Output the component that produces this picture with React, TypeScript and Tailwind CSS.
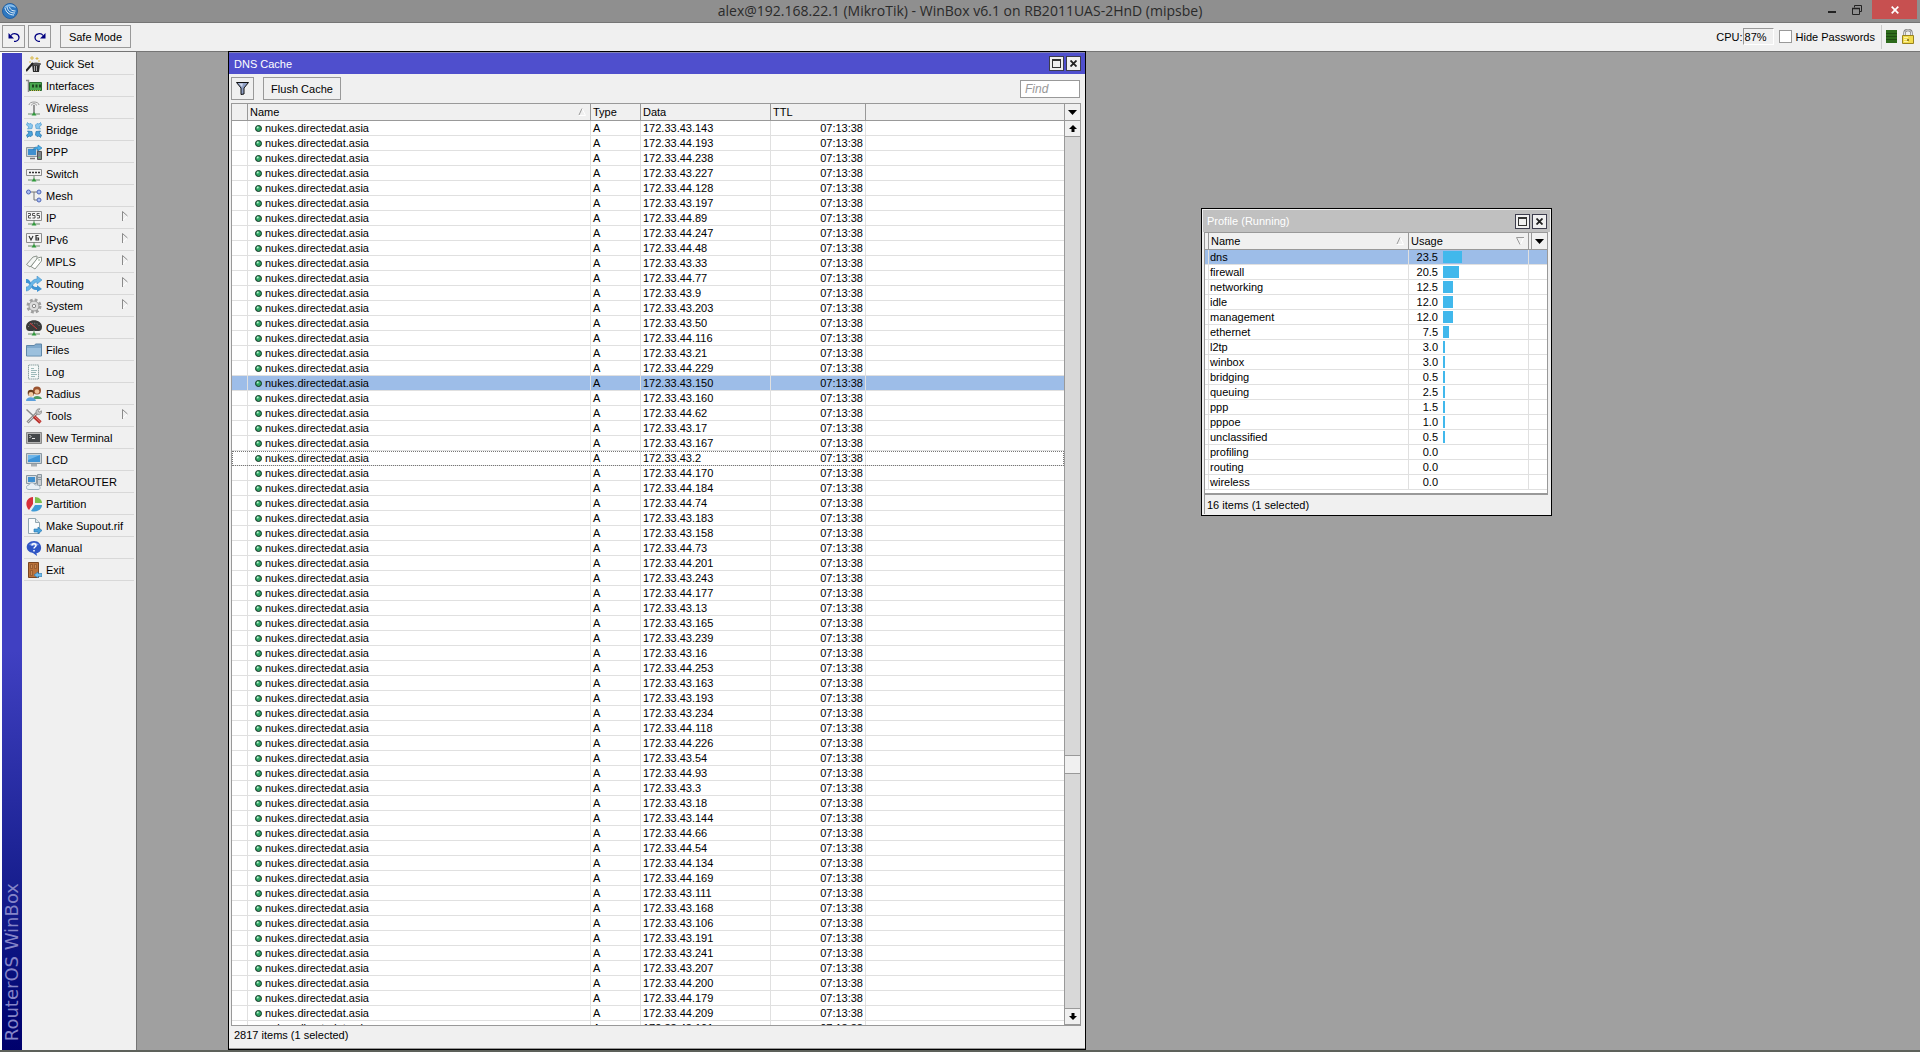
import { ReactNode, useState } from "react";

type MenuEntry = { label: string; icon: ReactNode; submenu?: boolean };

type ProfileRow = { name: string; usage: number };

const HOST = "nukes.directedat.asia";
const TTL = "07:13:38";

const addresses = [
  "43.143", "44.193", "44.238", "43.227", "44.128", "43.197", "44.89", "44.247",
  "44.48", "43.33", "44.77", "43.9", "43.203", "43.50", "44.116", "43.21",
  "44.229", "43.150", "43.160", "44.62", "43.17", "43.167", "43.2", "44.170",
  "44.184", "44.74", "43.183", "43.158", "44.73", "44.201", "43.243", "44.177",
  "43.13", "43.165", "43.239", "43.16", "44.253", "43.163", "43.193", "43.234",
  "44.118", "44.226", "43.54", "44.93", "43.3", "43.18", "43.144", "44.66",
  "44.54", "44.134", "44.169", "43.111", "43.168", "43.106", "43.191", "43.241",
  "43.207", "44.200", "44.179", "44.209", "43.101",
];

const profileRows: ProfileRow[] = [
  { name: "dns", usage: 23.5 },
  { name: "firewall", usage: 20.5 },
  { name: "networking", usage: 12.5 },
  { name: "idle", usage: 12 },
  { name: "management", usage: 12 },
  { name: "ethernet", usage: 7.5 },
  { name: "l2tp", usage: 3 },
  { name: "winbox", usage: 3 },
  { name: "bridging", usage: 0.5 },
  { name: "queuing", usage: 2.5 },
  { name: "ppp", usage: 1.5 },
  { name: "pppoe", usage: 1 },
  { name: "unclassified", usage: 0.5 },
  { name: "profiling", usage: 0 },
  { name: "routing", usage: 0 },
  { name: "wireless", usage: 0 },
];

function Icon({ children }: { children: ReactNode }) {
  return (
    <svg viewBox="0 0 16 16" className="h-4 w-4 shrink-0" fill="none" aria-hidden="true">
      {children}
    </svg>
  );
}

// Green plug that hangs under the network icons
function Plug() {
  return (
    <>
      <path d="M8 10v3M2 14h12" stroke="#6c8a6c" />
      <path d="M5.5 15.5L8 12l2.5 3.5z" fill="#2f9a3a" />
    </>
  );
}

const menu: MenuEntry[] = [
  {
    label: "Quick Set",
    icon: (
      <Icon>
        <path d="M6 8h8l-1 8H7z" fill="#2b2b2b" />
        <ellipse cx="10" cy="8" rx="5" ry="1.5" fill="#555" />
        <path d="M8.500 10v5M10.500 10v5" stroke="#aaa" />
        <path d="M0 15l7-8" stroke="#222" strokeWidth="2" />
        <path d="M6 0v4M4 2h4M11 1v3M9.500 2.500h3M4 5v2M13 4v2" stroke="#d8b84a" />
      </Icon>
    ),
  },
  {
    label: "Interfaces",
    icon: (
      <Icon>
        <path d="M0 2.500h2.500V14" stroke="#8a8a8a" strokeWidth="1.500" />
        <path d="M3.500 4.500h12v8h-12z" fill="#4aa850" stroke="#2a6b30" />
        <path d="M6 6.500h2v3H6zM9.500 6.500h2v3h-2zM13 6.500h2v3h-2z" fill="#1d4420" />
        <path d="M5 12.500h9" stroke="#c9b64d" strokeDasharray="1 1" />
      </Icon>
    ),
  },
  {
    label: "Wireless",
    icon: (
      <Icon>
        <path d="M3 5c0-4 10-4 10 0M5.500 5.500c0-2.500 5-2.500 5 0" stroke="#9a9a9a" />
        <path d="M8 5v8" stroke="#777" strokeWidth="1.500" />
        <path d="M2 14h12" stroke="#6c8a6c" />
        <path d="M5.500 15.500L8 12l2.500 3.500z" fill="#2f9a3a" />
      </Icon>
    ),
  },
  {
    label: "Bridge",
    icon: (
      <Icon>
        <path d="M1.500.500L3 2l2-.5L6.500 3 6 6.500l-4.500.5L3 5 .5 3z" fill="#8cc8ee" stroke="#4d9bd0" strokeWidth="0.700" />
        <path d="M14.500.500L13 2l-2-.5L9.500 3l.5 3.500 4.500.5L13 5l2.500-2z" fill="#8cc8ee" stroke="#4d9bd0" strokeWidth="0.700" />
        <path d="M1.500 15.500L3 14l2 .5L6.500 13 6 9.500 1.500 9 3 11 .5 13z" fill="#4aa3dc" stroke="#2472ab" strokeWidth="0.700" />
        <path d="M14.500 15.500L13 14l-2 .5L9.500 13l.5-3.500 4.500-.5L13 11l2.500 2z" fill="#4aa3dc" stroke="#2472ab" strokeWidth="0.700" />
      </Icon>
    ),
  },
  {
    label: "PPP",
    icon: (
      <Icon>
        <path d="M.5 3.500h11v9H.5z" fill="#c9d2d8" stroke="#8b97a0" />
        <path d="M2 5h8v6H2z" fill="#3f8fce" />
        <path d="M4 14.500h5" stroke="#777" strokeWidth="1.500" />
        <path d="M11.500 7.500h4v8h-4z" fill="#7c8288" stroke="#555" />
        <path d="M7 6c1-3 3-3 5-3V1l4 3-4 3V5c-2 0-4 0-5 1z" fill="#4ab0ea" stroke="#2374ad" strokeWidth="0.600" />
        <path d="M12.500 13.500h2" stroke="#5ec45e" />
      </Icon>
    ),
  },
  {
    label: "Switch",
    icon: (
      <Icon>
        <path d="M.5 3.500h15v6H.5z" fill="#f4f4f4" stroke="#8d8d8d" />
        <path d="M3 6.500h2M6 6.500h2M9 6.500h2M12 6.500h2" stroke="#333" strokeWidth="1.500" />
        <Plug />
      </Icon>
    ),
  },
  {
    label: "Mesh",
    icon: (
      <Icon>
        <path d="M5 4h6M8 4v8h3" stroke="#777" />
        <circle cx="2.500" cy="4" r="2" fill="#a9bdf0" stroke="#5167b8" />
        <circle cx="13" cy="4" r="2" fill="#a9bdf0" stroke="#5167b8" />
        <circle cx="13" cy="12" r="2" fill="#a9bdf0" stroke="#5167b8" />
      </Icon>
    ),
  },
  {
    label: "IP",
    submenu: true,
    icon: (
      <Icon>
        <path d="M.5 1.500h15v9H.5z" fill="#f4f4f4" stroke="#8d8d8d" />
        <path d="M2 3.500h2.500v2h-2V8H5M9 3.500H6.500v2H9V8H6.500M13.500 3.500H11v2h2.500V8H11" stroke="#555" />
        <Plug />
      </Icon>
    ),
  },
  {
    label: "IPv6",
    submenu: true,
    icon: (
      <Icon>
        <path d="M.5 1.500h15v9H.5z" fill="#f4f4f4" stroke="#8d8d8d" />
        <path d="M3 4l2 4 2-4M12.500 3.500H10v4.500h2.500V6H10" stroke="#333" strokeWidth="1.200" />
        <Plug />
      </Icon>
    ),
  },
  {
    label: "MPLS",
    submenu: true,
    icon: (
      <Icon>
        <path d="M.5 10.500L7 3l4-1v3.500L4 13z" fill="#f3f5f3" stroke="#8c948c" />
        <path d="M5 12.500L11.500 4l4-1v4L9 15z" fill="#fff" stroke="#8c948c" />
        <circle cx="13" cy="6" r=".7" fill="#6c8a6c" />
      </Icon>
    ),
  },
  {
    label: "Routing",
    submenu: true,
    icon: (
      <Icon>
        <path d="M0 3c5-1 5 9 11 8V9l5 4-5 3v-2C4 15 5 6 0 7z" fill="#3f94d4" />
        <path d="M0 15v-4c5 0 4-8 11-8V0l5 4-5 4V6c-5 0-5 9-11 9z" fill="#68b6e8" stroke="#3a86c0" strokeWidth="0.500" />
      </Icon>
    ),
  },
  {
    label: "System",
    submenu: true,
    icon: (
      <Icon>
        <circle cx="8" cy="8" r="6" stroke="#a0a0a0" strokeWidth="3" strokeDasharray="2.700 2" />
        <circle cx="8" cy="8" r="5" fill="#dcdcdc" stroke="#9a9a9a" />
        <circle cx="8" cy="8" r="1.700" fill="#f4f4f4" stroke="#888" />
      </Icon>
    ),
  },
  {
    label: "Queues",
    icon: (
      <Icon>
        <path d="M0 7c0-9 16-9 16 0 0 3-2 4-3 4H3c-1 0-3-1-3-4z" fill="#3a3a3a" />
        <path d="M2.500 7c0-5 11-5 11 0" stroke="#8a8a8a" strokeDasharray="1 1.500" />
        <path d="M4 3l7 6" stroke="#d43c3c" />
        <Plug />
      </Icon>
    ),
  },
  {
    label: "Files",
    icon: (
      <Icon>
        <path d="M.5 3.500h8l1-1.500h6v12H.5z" fill="#7fa9cc" stroke="#5f86a8" />
        <path d="M1 6h14v7.500H1z" fill="#9cc0dd" />
      </Icon>
    ),
  },
  {
    label: "Log",
    icon: (
      <Icon>
        <path d="M2.500 1v14h10V1z" fill="#f5f8f7" stroke="#8fa3a3" strokeDasharray="1.500 .5" />
        <path d="M5 4.500h3M5 6.500h6M5 8.500h5M5 10.500h6M5 12.500h4" stroke="#9db9b9" />
      </Icon>
    ),
  },
  {
    label: "Radius",
    icon: (
      <Icon>
        <path d="M7 13c0-4 8-4 9 0z" fill="#4c9a5e" />
        <circle cx="11" cy="4.500" r="4" fill="#9a5230" />
        <circle cx="11" cy="5.500" r="2.300" fill="#f0c197" />
        <path d="M0 15c0-5 9-5 10 0z" fill="#5c9fdc" />
        <circle cx="5" cy="7" r="3.300" fill="#6b3d1c" />
        <circle cx="5" cy="8.300" r="2.400" fill="#f3cba3" />
      </Icon>
    ),
  },
  {
    label: "Tools",
    submenu: true,
    icon: (
      <Icon>
        <path d="M1.500 14.500L11 5" stroke="#8e8e8e" strokeWidth="3" />
        <path d="M2 14L11 5" stroke="#d0d0d0" />
        <path d="M14 .8l-2 2 1 1.400 2.500-1.400c.5 3-2 4.500-4 3.500S9 .5 14 .8z" fill="#c4c4c4" stroke="#808080" strokeWidth="0.700" />
        <path d="M.5 1.500l7.500 7" stroke="#8a8a8a" strokeWidth="1.500" />
        <path d="M8 8.500l6.500 6" stroke="#b8302c" strokeWidth="3.400" />
        <path d="M8.500 8.500l6 5.500" stroke="#e8807a" />
      </Icon>
    ),
  },
  {
    label: "New Terminal",
    icon: (
      <Icon>
        <path d="M.5 2.500h15v11H.5z" fill="#b4b4b4" stroke="#8a8a8a" />
        <path d="M2 4h12v8H2z" fill="#44474a" />
        <path d="M3.500 5l1.500 1.500L3.500 8M6 8.500h3" stroke="#e6e6e6" />
      </Icon>
    ),
  },
  {
    label: "LCD",
    icon: (
      <Icon>
        <path d="M.5 1.500h15v10H.5z" fill="#c9d2d8" stroke="#8b97a0" />
        <path d="M2 3h12v7H2z" fill="#3d93d6" />
        <path d="M2 3h12L2 8z" fill="#6fb6ea" />
        <path d="M5 12h6v2.500H5z" fill="#a6adb2" />
      </Icon>
    ),
  },
  {
    label: "MetaROUTER",
    icon: (
      <Icon>
        <path d="M11.500.500h4v11h-4z" fill="#c9ced2" stroke="#8b97a0" />
        <path d="M12 3.500h3M12 5.500h3" stroke="#8b97a0" />
        <path d="M.5 1.500h10v8H.5z" fill="#d5dde2" stroke="#8b97a0" />
        <path d="M2 3h7v5H2z" fill="#3f8fce" />
        <path d="M3 15.500c-4 0-3-4.500 0-4.500 1-3 5-3 6 0 5-1 7 4.500 3 4.500z" fill="#e9f0f5" stroke="#9fb2c0" />
      </Icon>
    ),
  },
  {
    label: "Partition",
    icon: (
      <Icon>
        <path d="M7 1v7l-4 6C-1 10-1 2 7 1z" fill="#d8303a" />
        <path d="M9 1c4 0 7 3 7 6H9z" fill="#7cc04b" />
        <path d="M9 9h7c0 4-5 8-11 6z" fill="#3f9bd6" />
      </Icon>
    ),
  },
  {
    label: "Make Supout.rif",
    icon: (
      <Icon>
        <path d="M2.500.5h7l4 4v11h-11z" fill="#fafcfd" stroke="#93a7b0" />
        <path d="M9.500.5v4h4" fill="#dfe8ec" stroke="#93a7b0" />
        <path d="M8 11h4V9l4 3.500-4 3.500v-2H8z" fill="#4aa3dc" stroke="#2472ab" strokeWidth="0.600" />
      </Icon>
    ),
  },
  {
    label: "Manual",
    icon: (
      <Icon>
        <path d="M8 1c9 0 9 12 2.500 12L11 16l-4-3C-2 12-1 1 8 1z" fill="#2f55c4" />
        <path d="M3 5c2-3.500 8-3.500 10 0-3 1-7 1-10 0z" fill="#7d9bea" />
        <path d="M6 5.500c0-2.500 4-2.500 4 0C10 7 8 7 8 8.500M8 10v1.500" stroke="#fff" strokeWidth="1.500" />
      </Icon>
    ),
  },
  {
    label: "Exit",
    icon: (
      <Icon>
        <path d="M2.500.5h10v15h-10z" fill="#b9713a" stroke="#7a4520" />
        <path d="M4.500 2.500h2v4h-2zM8.500 2.500h2v4h-2zM4.500 8.500h2v5h-2z" fill="#c98852" stroke="#8a5228" strokeWidth="0.700" />
        <path d="M16 11.500h-4V10l-4 3 4 3v-1.500h4z" fill="#6fb9e8" stroke="#2472ab" strokeWidth="0.600" />
      </Icon>
    ),
  },
];

function WindowControls() {
  return (
    <div className="flex gap-[2px]">
      <button
        aria-label="Maximize"
        className="flex h-[15px] w-[15px] items-center justify-center border border-[#3c3c4c] bg-[#f0f0f0]"
      >
        <span className="h-[9px] w-[9px] border border-t-2 border-[#333]" />
      </button>
      <button
        aria-label="Close"
        className="flex h-[15px] w-[15px] items-center justify-center border border-[#3c3c4c] bg-[#f0f0f0]"
      >
        <svg viewBox="0 0 7 7" className="h-[7px] w-[7px]" aria-hidden="true">
          <path d="M.5.5l6 6M6.500.5l-6 6" stroke="#222" strokeWidth="1.800" />
        </svg>
      </button>
    </div>
  );
}

function ColumnsButton() {
  return (
    <button aria-label="Choose columns" className="flex h-4 w-full items-center justify-center bg-[#f0f0f0]">
      <svg viewBox="0 0 9 5" className="h-[5px] w-[9px]" aria-hidden="true">
        <path d="M0 0h9L4.500 5z" fill="#000" />
      </svg>
    </button>
  );
}

function SortMark({ down = false }: { down?: boolean }) {
  return (
    <svg viewBox="0 0 8 8" className="h-2 w-2" fill="none" aria-hidden="true">
      {down ? (
        <>
          <path d="M7.500 1L4.500 7.500" stroke="#fff" />
          <path d="M8 .5H.5L4 7.500" stroke="#999" />
        </>
      ) : (
        <>
          <path d="M4 .5L7.500 7.500H1" stroke="#fff" />
          <path d="M4 .5L1 7" stroke="#999" />
        </>
      )}
    </svg>
  );
}

function ScrollArrow({ down = false }: { down?: boolean }) {
  return (
    <button
      aria-label={down ? "Scroll down" : "Scroll up"}
      className="flex h-4 w-full shrink-0 items-center justify-center border-b border-[#999] bg-[#f0f0f0]"
    >
      <svg viewBox="0 0 8 7" className="h-[7px] w-2" aria-hidden="true">
        <path d={down ? "M2.500 0h3v3H8L4 7 0 3h2.500z" : "M4 0l4 4H5.500v3h-3V4H0z"} fill="#000" />
      </svg>
    </button>
  );
}

function HeadCell({ label, children }: { label?: string; children?: ReactNode }) {
  return (
    <th scope="col" className="h-[17px] border-r border-b border-[#999] bg-[#f0f0f0] p-0 pl-[2px] text-left font-normal">
      <div className="flex items-center justify-between pr-1">
        <span>{label}</span>
        {children}
      </div>
    </th>
  );
}

function DnsWindow() {
  const [selected, setSelected] = useState(17);
  const focused = 22;

  return (
    <section className="absolute -top-px bottom-0 left-[91px] flex w-[858px] flex-col border border-black bg-[#f0f0f0]">
      <header className="flex h-[22px] shrink-0 items-center justify-between border-t border-[#8484b4] bg-[#4f4fcd] pr-1 pl-[5px]">
        <h2 className="text-white">DNS Cache</h2>
        <WindowControls />
      </header>

      <div className="flex h-[29px] shrink-0 items-center gap-[9px] px-[2px]">
        <button
          aria-label="Filter"
          className="flex h-[23px] w-[23px] items-center justify-center border border-[#999] bg-[#f0f0f0]"
        >
          <svg viewBox="0 0 13 13" className="h-[13px] w-[13px]" aria-hidden="true">
            <path d="M.5.500h12L8 6v6L5 12.500V6z" fill="#8f9fc4" stroke="#111" />
            <path d="M3 1.500h4L6 5z" fill="#d5dcec" />
          </svg>
        </button>
        <button className="h-[23px] w-[78px] border border-[#999] bg-[#f0f0f0]">Flush Cache</button>
        <input
          aria-label="Find"
          placeholder="Find"
          className="mr-[3px] ml-auto h-[18px] w-[60px] border border-[#999] bg-white px-1 text-xs italic outline-none placeholder:text-[#999]"
        />
      </div>

      <div className="mr-1 ml-[2px] flex min-h-0 flex-1 border border-[#999] bg-white">
        <div className="min-w-0 flex-1 overflow-hidden">
          <table className="w-full table-fixed border-separate border-spacing-0">
            <colgroup>
              <col className="w-4" />
              <col className="w-[343px]" />
              <col className="w-[50px]" />
              <col className="w-[130px]" />
              <col className="w-[95px]" />
              <col />
            </colgroup>
            <thead>
              <tr>
                <HeadCell />
                <HeadCell label="Name">
                  <SortMark />
                </HeadCell>
                <HeadCell label="Type" />
                <HeadCell label="Data" />
                <HeadCell label="TTL" />
                <th className="border-b border-[#999] bg-[#f0f0f0] p-0" />
              </tr>
            </thead>
            <tbody>
              {addresses.map((address, i) => (
                <tr
                  key={i}
                  onClick={() => setSelected(i)}
                  className={
                    i === selected
                      ? "bg-[#9dbde8]"
                      : i === focused
                        ? "outline-1 -outline-offset-1 outline-[#777] outline-dotted"
                        : ""
                  }
                >
                  <td className="h-[15px] border-r border-b border-[#e0e0e0] p-0" />
                  <td className="border-r border-b border-[#e0e0e0] p-0 pl-[7px]">
                    <div className="flex items-center gap-[3px]">
                      <svg viewBox="0 0 7 7" className="h-[7px] w-[7px]" aria-hidden="true">
                        <circle cx="3.500" cy="3.500" r="3" fill="#2fa565" stroke="#123020" />
                        <circle cx="2.700" cy="2.600" r="1" fill="#b8f0d0" />
                      </svg>
                      {HOST}
                    </div>
                  </td>
                  <td className="border-r border-b border-[#e0e0e0] p-0 pl-[2px]">A</td>
                  <td className="border-r border-b border-[#e0e0e0] p-0 pl-[2px]">172.33.{address}</td>
                  <td className="border-r border-b border-[#e0e0e0] p-0 pr-[2px] text-right">{TTL}</td>
                  <td className="border-b border-[#e0e0e0] p-0" />
                </tr>
              ))}
            </tbody>
          </table>
        </div>

        <div className="flex w-4 shrink-0 flex-col border-l border-[#999] bg-[#d8d8d8]">
          <div className="border-b border-[#999]">
            <ColumnsButton />
          </div>
          <ScrollArrow />
          <div className="flex-[620]" />
          <div className="h-[19px] border-y border-[#999] bg-[#f0f0f0]" />
          <div className="flex-[235] border-b border-[#999]" />
          <ScrollArrow down />
        </div>
      </div>

      <footer className="flex h-[23px] shrink-0 items-center border-b border-[#999] pb-1 pl-[5px]">
        2817 items (1 selected)
      </footer>
    </section>
  );
}

function ProfileWindow() {
  const [selected, setSelected] = useState("dns");

  return (
    <section className="absolute top-[156px] left-[1064px] w-[351px] border border-black bg-[#f0f0f0] p-px">
      <header className="flex h-[22px] items-center justify-between bg-[#c0c0c0] pr-[3px] pl-1">
        <h2 className="text-white">Profile (Running)</h2>
        <WindowControls />
      </header>

      <div className="mr-[2px] ml-px border border-b-2 border-[#999] bg-white pb-[3px]">
        <table className="w-full table-fixed border-separate border-spacing-0">
          <colgroup>
            <col className="w-1" />
            <col className="w-[200px]" />
            <col className="w-[120px]" />
            <col />
          </colgroup>
          <thead>
            <tr>
              <th className="border-r border-b border-[#999] bg-[#f0f0f0] p-0" />
              <HeadCell label="Name">
                <SortMark />
              </HeadCell>
              <HeadCell label="Usage">
                <SortMark down />
              </HeadCell>
              <th className="border-b border-[#999] bg-[#f0f0f0] p-0 pl-[2px]">
                <div className="border-l border-[#999]">
                  <ColumnsButton />
                </div>
              </th>
            </tr>
          </thead>
          <tbody>
            {profileRows.map(({ name, usage }) => (
              <tr
                key={name}
                onClick={() => setSelected(name)}
                className={name === selected ? "bg-[#9dbde8]" : ""}
              >
                <td className="h-[15px] border-r border-b border-[#e0e0e0] p-0" />
                <td className="border-r border-b border-[#e0e0e0] p-0 pl-px">{name}</td>
                <td className="border-r border-b border-[#e0e0e0] p-0">
                  <div className="flex items-center gap-[5px]">
                    <span className="w-[29px] text-right">{usage.toFixed(1)}</span>
                    {usage > 0 && (
                      <span
                        className="h-3 bg-[#41b8ec]"
                        style={{ width: Math.max(2, Math.round(usage * 0.8)) }}
                      />
                    )}
                  </div>
                </td>
                <td className="border-b border-[#e0e0e0] p-0" />
              </tr>
            ))}
          </tbody>
        </table>
      </div>

      <footer className="mx-px flex h-[19px] items-center border-l border-[#999] pl-[2px]">16 items (1 selected)</footer>
    </section>
  );
}

export default function App() {
  const [hidePasswords, setHidePasswords] = useState(false);

  return (
    <div className="h-screen overflow-hidden bg-white pr-1 font-['Liberation_Sans',Arial,sans-serif] text-[11px] leading-[14px] text-black">
      <div className="flex h-full flex-col">
        {/* Title bar */}
        <header className="grid h-[23px] shrink-0 grid-cols-[1fr_auto_1fr] border-b border-[#757575] bg-[#8f8f8f]">
          <svg viewBox="0 0 16 16" className="mt-[3px] ml-[2px] h-4 w-4" fill="none" aria-hidden="true">
            <circle cx="8" cy="8" r="7.500" fill="#2f78c0" stroke="#2560a0" />
            <path d="M2 5c2-5 10-5 12 0-4-2-8-2-12 0z" fill="#86bdec" />
            <path d="M3 5c1 4 4 7 9 7M5 4c1 4 3 6 8 6M7.500 4c.5 2 2 4 6 4" stroke="#e3f1fc" />
          </svg>
          <h1 className="font-['Open_Sans',sans-serif] text-sm leading-[22px] text-[#2a2a2a]">
            alex@192.168.22.1 (MikroTik) - WinBox v6.1 on RB2011UAS-2HnD (mipsbe)
          </h1>
          <div className="mr-[3px] flex justify-end gap-[5px]">
            <button aria-label="Minimize" className="flex h-[19px] w-5 items-center justify-center">
              <span className="mt-1 h-[2px] w-2 bg-[#222]" />
            </button>
            <button aria-label="Restore" className="flex h-[19px] w-5 items-center justify-center">
              <svg viewBox="0 0 10 10" className="h-[10px] w-[10px]" fill="none" aria-hidden="true">
                <path d="M2.500 2.500v-2h7v6h-2" stroke="#222" />
                <path d="M.5 3.500h7v6h-7z" stroke="#222" />
                <path d="M0 3.500h8" stroke="#222" strokeWidth="1.500" />
              </svg>
            </button>
            <button aria-label="Close" className="flex h-[19px] w-[45px] items-center justify-center bg-[#c75050]">
              <svg viewBox="0 0 8 8" className="h-2 w-2" aria-hidden="true">
                <path d="M.7.7l6.600 6.600M7.300.7L.7 7.300" stroke="#fff" strokeWidth="1.700" />
              </svg>
            </button>
          </div>
        </header>

        {/* Toolbar */}
        <div className="flex h-7 shrink-0 items-center bg-[#f0f0f0] pb-px pl-[2px]">
          <button aria-label="Undo" className="mr-[3px] flex h-[23px] w-[23px] items-center justify-center border border-[#999]">
            <svg viewBox="0 0 12 10" className="h-[10px] w-3" fill="none" aria-hidden="true">
              <path d="M3 3.500c2-3 8-2 8 2 0 2-2 4-5 4" stroke="#000080" strokeWidth="1.300" />
              <path d="M.5 1v5.500H6z" fill="#000080" />
            </svg>
          </button>
          <button aria-label="Redo" className="mr-[9px] flex h-[23px] w-[23px] items-center justify-center border border-[#999]">
            <svg viewBox="0 0 12 10" className="h-[10px] w-3" fill="none" aria-hidden="true">
              <path d="M9 3.500c-2-3-8-2-8 2 0 2 2 4 5 4" stroke="#000080" strokeWidth="1.300" />
              <path d="M11.500 1v5.500H6z" fill="#000080" />
            </svg>
          </button>
          <button className="h-[23px] w-[71px] border border-[#999]">Safe Mode</button>

          <div className="ml-auto flex items-center pr-[6px]">
            <span>CPU:</span>
            <output className="mr-[5px] h-[17px] w-[31px] border border-t-[#999] border-r-white border-b-white border-l-[#999] pt-px pl-px">
              87%
            </output>
            <label className="flex items-center gap-1">
              <input
                type="checkbox"
                checked={hidePasswords}
                onChange={(e) => setHidePasswords(e.target.checked)}
                className="h-[13px] w-[13px] appearance-none border border-[#999] bg-white checked:bg-[#4f4fcd]"
              />
              Hide Passwords
            </label>
            <span className="mr-1 ml-[6px] h-6 w-px bg-[#ccc]" />
            <svg viewBox="0 0 11 13" className="mr-[5px] h-[13px] w-[11px]" aria-hidden="true">
              <path d="M0 0h11v13H0z" fill="#2e6b1c" />
              <path d="M0 3.500h11M0 6.500h11M0 9.500h11" stroke="#1f4d12" />
            </svg>
            <svg viewBox="0 0 12 15" className="h-[15px] w-3" fill="none" aria-hidden="true">
              <path d="M2.500 7V4c0-4 7-4 7 0v3" stroke="#808080" strokeWidth="2.400" />
              <path d="M2.500 7V4c0-4 7-4 7 0v3" stroke="#e4e4e4" />
              <path d="M.5 6.500h11v8H.5z" fill="#f2dc4e" stroke="#9a8420" />
              <path d="M2 8.500h4M2 10.500h4M2 12.500h4" stroke="#fbf3a8" />
              <path d="M6 10v2" stroke="#7a6410" strokeWidth="1.500" />
            </svg>
          </div>
        </div>

        <div className="flex min-h-0 flex-1 border-t border-[#757575]">
          {/* Brand strip */}
          <div className="ml-[2px] mt-px flex w-5 shrink-0 items-end justify-center bg-linear-to-b from-[#4040c2] from-60% to-[#00006c] pb-[9px]">
            <span className="rotate-180 font-['DejaVu_Sans',Verdana,sans-serif] text-lg leading-5 whitespace-nowrap text-[#8585c8] [writing-mode:vertical-rl]">
              RouterOS WinBox
            </span>
          </div>

          {/* Menu */}
          <nav className="w-[115px] shrink-0 border-r border-[#757575] bg-[#f0f0f0] px-[2px] pt-px">
            {menu.map((entry) => (
              <button
                key={entry.label}
                className="flex h-[22px] w-[110px] items-center gap-1 border-b border-[#d8d8d8] pl-[2px] text-left whitespace-nowrap"
              >
                {entry.icon}
                {entry.label}
                {entry.submenu && (
                  <svg viewBox="0 0 6 10" className="mr-[6px] mb-1 ml-auto h-[10px] w-[6px]" fill="none" aria-hidden="true">
                    <path d="M5.500 5L.5 9.500" stroke="#fff" />
                    <path d="M.5 10V.5L5.500 5" stroke="#8a8a8a" />
                  </svg>
                )}
              </button>
            ))}
          </nav>

          {/* Desktop */}
          <main className="relative flex-1 bg-[#a0a0a0]">
            <DnsWindow />
            <ProfileWindow />
          </main>
        </div>

        <div className="h-[2px] shrink-0 bg-[#5d615b]" />
      </div>
    </div>
  );
}
